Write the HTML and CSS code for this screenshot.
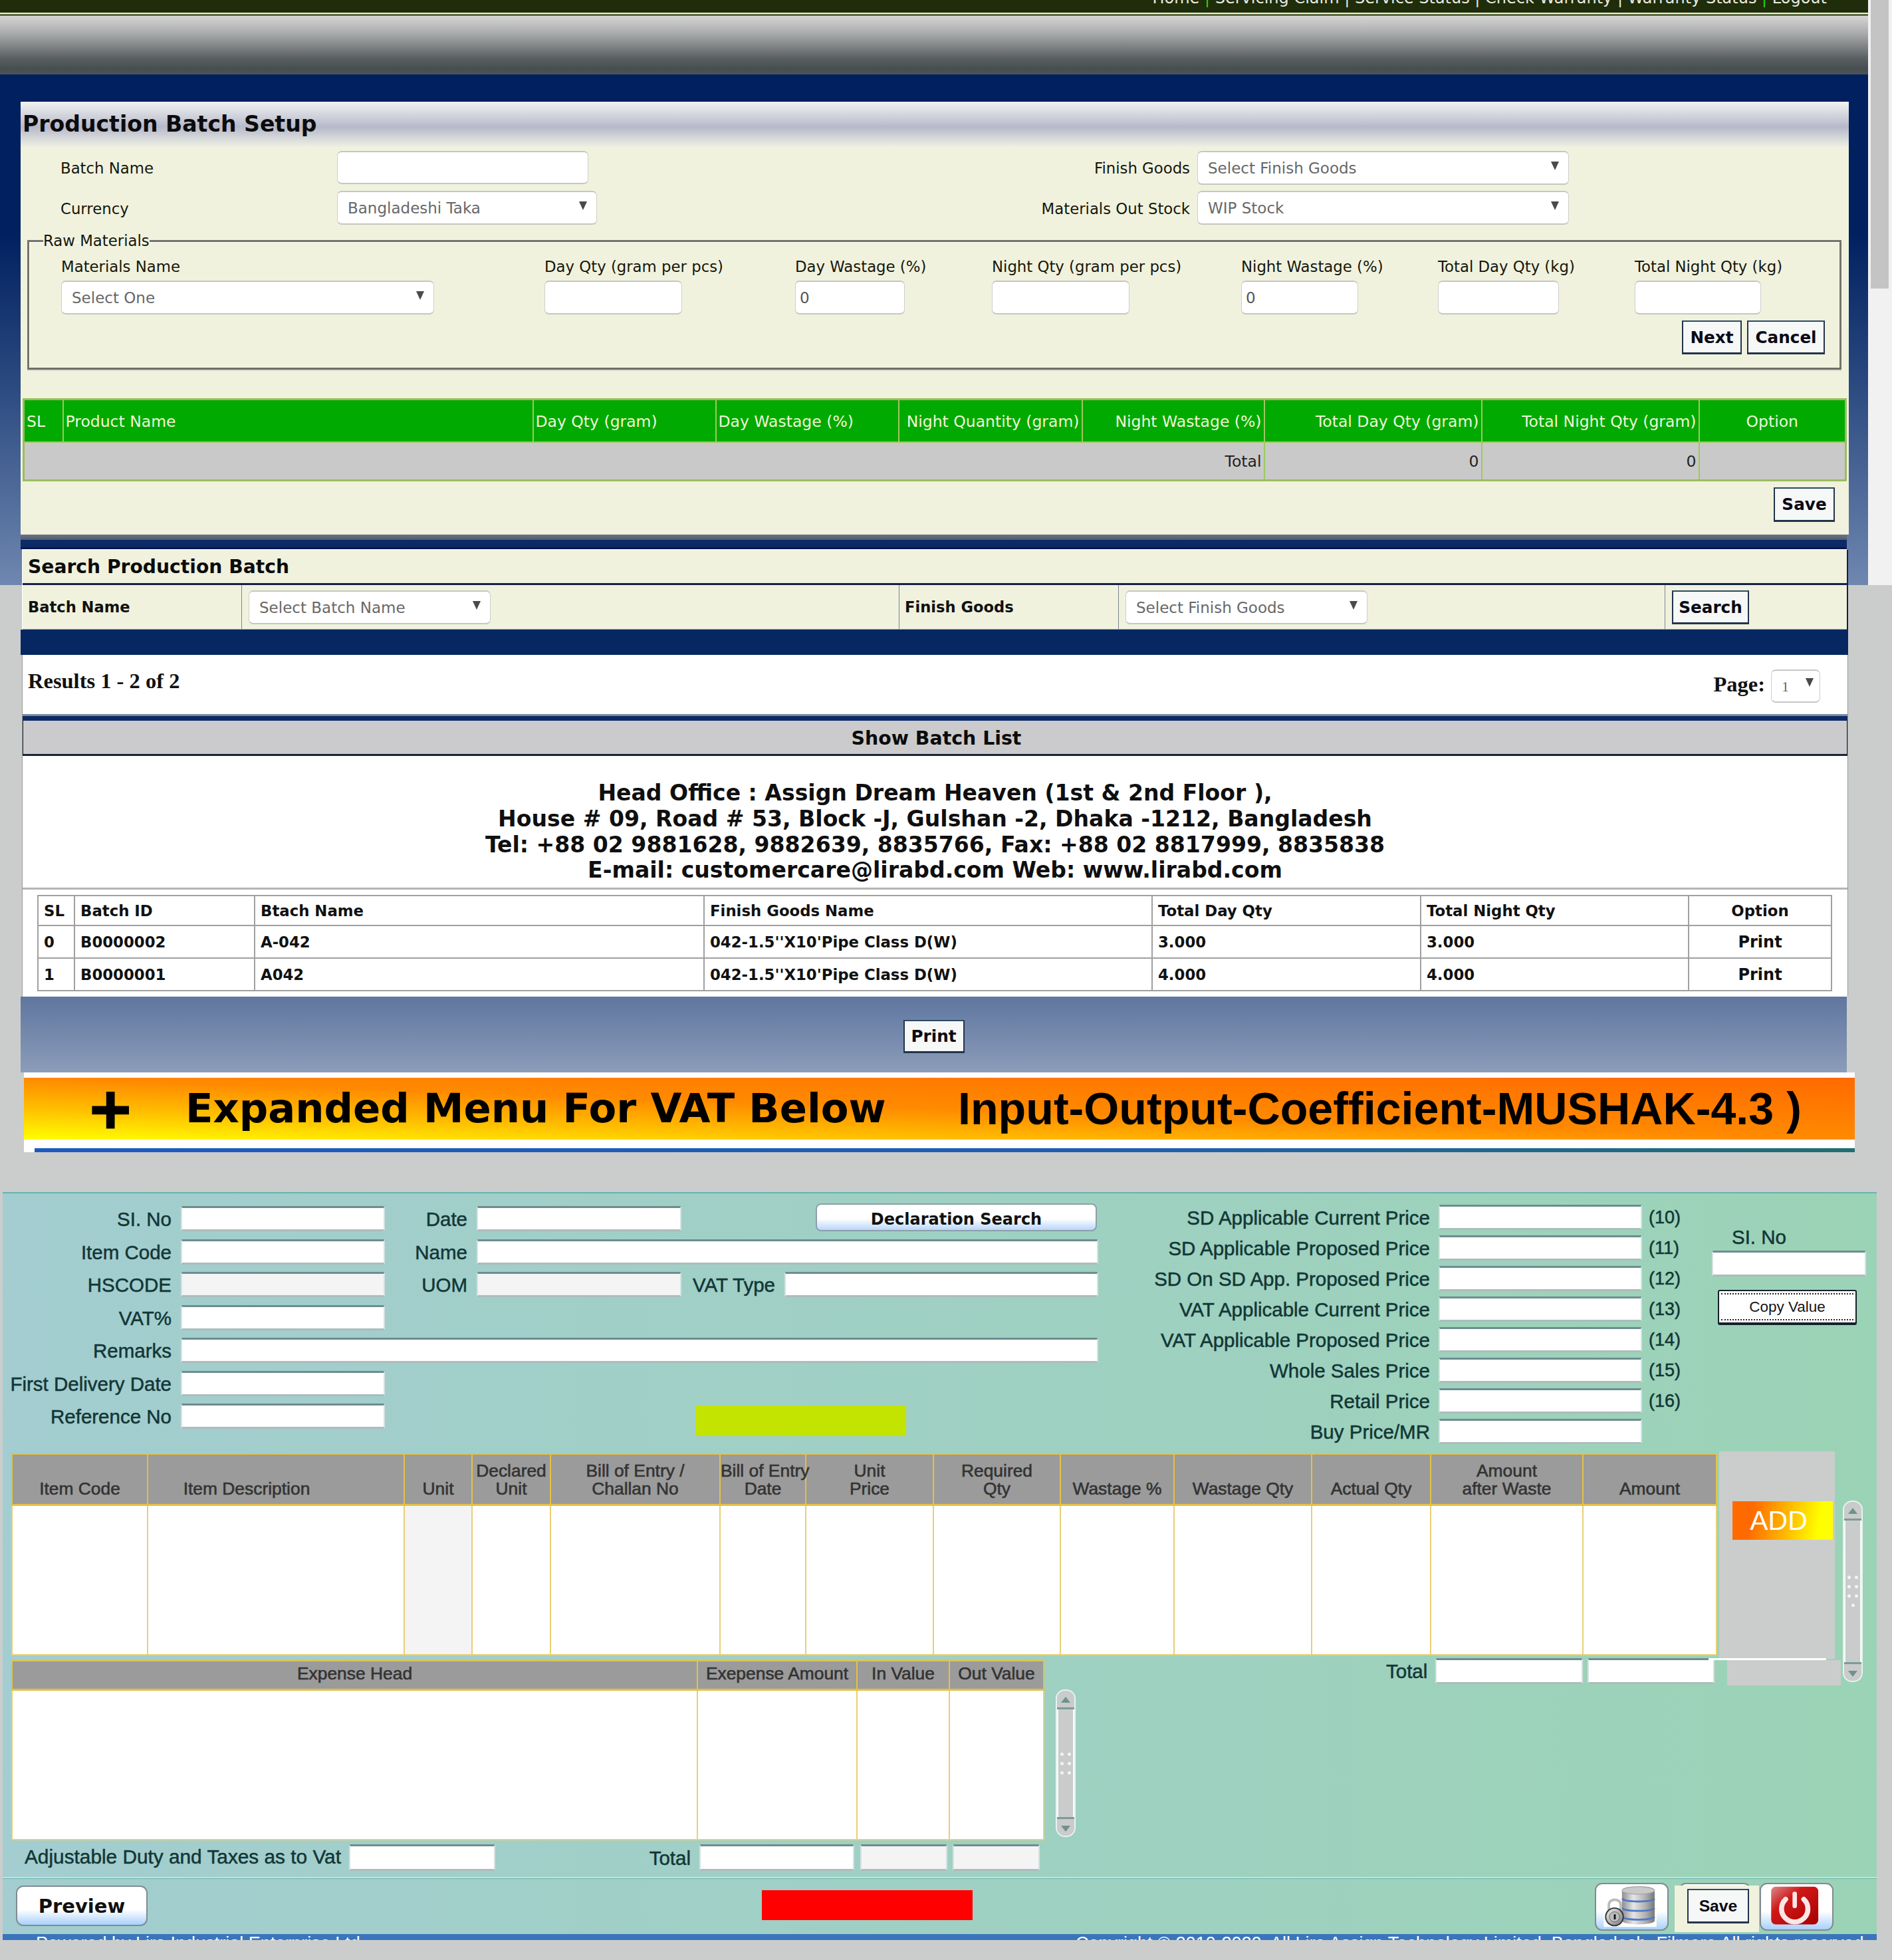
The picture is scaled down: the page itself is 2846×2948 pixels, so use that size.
FILE: index.html
```html
<!DOCTYPE html>
<html lang="en">
<head>
<meta charset="utf-8">
<title>Production Batch Setup</title>
<link rel="stylesheet" href="styles.css">
</head>
<body>
<div class="page">
  <div class="scrollbar-main"><div class="scrollbar-thumb"></div></div>

  <header class="topbar">
    <nav class="topnav">Home <b>|</b> Servicing Claim | Service Status | Check Warranty | Warranty Status <b>|</b> Logout</nav>
  </header>
  <div class="topline"></div>
  <div class="headband"></div>

  <main class="main">
    <section class="setup">
      <h1 class="setup-title">Production Batch Setup</h1>
      <div class="setup-grid">
        <label class="lbl">Batch Name</label>
        <div><input class="inp inp-batch" type="text"></div>
        <label class="lbl lbl-right">Finish Goods</label>
        <div class="sel sel-goods">Select Finish Goods</div>
        <label class="lbl">Currency</label>
        <div class="sel sel-cur">Bangladeshi Taka</div>
        <label class="lbl lbl-right">Materials Out Stock</label>
        <div class="sel sel-goods">WIP Stock</div>
      </div>
      <fieldset class="raw">
        <legend class="raw-legend">Raw Materials</legend>
        <div class="raw-grid">
          <div class="raw-col"><label class="lbl">Materials Name</label><div class="sel sel-mat">Select One</div></div>
          <div class="raw-col"><label class="lbl">Day Qty (gram per pcs)</label><input class="inp w207" type="text"></div>
          <div class="raw-col"><label class="lbl">Day Wastage (%)</label><input class="inp w165" type="text" value="0"></div>
          <div class="raw-col"><label class="lbl">Night Qty (gram per pcs)</label><input class="inp w207" type="text"></div>
          <div class="raw-col"><label class="lbl">Night Wastage (%)</label><input class="inp w176" type="text" value="0"></div>
          <div class="raw-col"><label class="lbl">Total Day Qty (kg)</label><input class="inp w182" type="text"></div>
          <div class="raw-col"><label class="lbl">Total Night Qty (kg)</label><input class="inp w190" type="text"></div>
        </div>
        <div class="raw-actions"><button class="btn btn-next">Next</button><button class="btn btn-cancel">Cancel</button></div>
      </fieldset>
      <table class="green-table">
        <colgroup><col class="g1"><col class="g2"><col class="g3"><col class="g4"><col class="g5"><col class="g6"><col class="g7"><col class="g8"><col class="g9"></colgroup>
        <thead><tr>
          <th>SL</th><th>Product Name</th><th>Day Qty (gram)</th><th>Day Wastage (%)</th>
          <th class="tr">Night Quantity (gram)</th><th class="tr">Night Wastage (%)</th><th class="tr">Total Day Qty (gram)</th><th class="tr">Total Night Qty (gram)</th><th class="tc">Option</th>
        </tr></thead>
        <tbody><tr><td colspan="6" class="tr">Total</td><td class="tr">0</td><td class="tr">0</td><td></td></tr></tbody>
      </table>
      <div class="save-row"><button class="btn btn-save">Save</button></div>
    </section>
    <div class="strip-gray"></div>
    <div class="strip-navy"></div>

    <section class="search">
      <h2 class="search-title">Search Production Batch</h2>
      <div class="search-grid">
        <div class="search-cell"><b>Batch Name</b></div>
        <div class="search-cell"><div class="sel sel-search">Select Batch Name</div></div>
        <div class="search-cell"><b>Finish Goods</b></div>
        <div class="search-cell"><div class="sel sel-search">Select Finish Goods</div></div>
        <div class="search-cell"><button class="btn btn-search">Search</button></div>
      </div>
    </section>
    <div class="band-navy"></div>

    <section class="results">
      <div class="results-bar">
        <span class="results-count">Results 1 - 2 of 2</span>
        <span class="results-page">Page:<span class="sel sel-page">1</span></span>
      </div>
      <h2 class="list-title">Show Batch List</h2>
      <address class="office">
        <div>Head Office : Assign Dream Heaven (1st &amp; 2nd Floor ),</div>
        <div>House # 09, Road # 53, Block -J, Gulshan -2, Dhaka -1212, Bangladesh</div>
        <div>Tel: +88 02 9881628, 9882639, 8835766, Fax: +88 02 8817999, 8835838</div>
        <div>E-mail: customercare@lirabd.com Web: www.lirabd.com</div>
      </address>
      <table class="batch-table">
        <colgroup><col class="b1"><col class="b2"><col class="b3"><col class="b4"><col class="b5"><col class="b6"><col class="b7"></colgroup>
        <thead><tr><th>SL</th><th>Batch ID</th><th>Btach Name</th><th>Finish Goods Name</th><th>Total Day Qty</th><th>Total Night Qty</th><th class="tc">Option</th></tr></thead>
        <tbody>
          <tr><td>0</td><td>B0000002</td><td>A-042</td><td>042-1.5''X10'Pipe Class D(W)</td><td>3.000</td><td>3.000</td><td class="tc print-link">Print</td></tr>
          <tr><td>1</td><td>B0000001</td><td>A042</td><td>042-1.5''X10'Pipe Class D(W)</td><td>4.000</td><td>4.000</td><td class="tc print-link">Print</td></tr>
        </tbody>
      </table>
    </section>
    <div class="print-band"><button class="btn btn-print">Print</button></div>
  </main>

  <section class="banner-wrap">
    <div class="banner">
      <span class="banner-plus">+</span>
      <span class="banner-a">Expanded Menu For VAT Below</span>
      <span class="banner-b">Input-Output-Coefficient-MUSHAK-4.3 )</span>
    </div>
    <div class="banner-line"></div>
  </section>

  <section class="vat">
    <div class="vat-top">
      <div class="vat-left">
        <label class="vl row-start">SI. No</label><input class="vi" type="text">
        <label class="vl">Date</label><input class="vi" type="text">
        <button class="decl">Declaration Search</button>

        <label class="vl row-start">Item Code</label><input class="vi" type="text">
        <label class="vl">Name</label><input class="vi span-3" type="text">

        <label class="vl row-start">HSCODE</label><input class="vi vi-off" type="text">
        <label class="vl">UOM</label><input class="vi vi-off" type="text">
        <label class="vl">VAT Type</label><input class="vi" type="text">

        <label class="vl row-start">VAT%</label><input class="vi" type="text">

        <label class="vl row-start">Remarks</label><input class="vi span-5" type="text">

        <label class="vl row-start">First Delivery Date</label><input class="vi" type="text">

        <label class="vl row-start">Reference No</label><input class="vi" type="text">
        <div class="lime"></div>
      </div>
      <div class="vat-right">
        <label class="vl">SD Applicable Current Price</label><input class="vi" type="text"><span class="vn">(10)</span>
        <label class="vl">SD Applicable Proposed Price</label><input class="vi" type="text"><span class="vn">(11)</span>
        <label class="vl">SD On SD App. Proposed Price</label><input class="vi" type="text"><span class="vn">(12)</span>
        <label class="vl">VAT Applicable Current Price</label><input class="vi" type="text"><span class="vn">(13)</span>
        <label class="vl">VAT Applicable Proposed Price</label><input class="vi" type="text"><span class="vn">(14)</span>
        <label class="vl">Whole Sales Price</label><input class="vi" type="text"><span class="vn">(15)</span>
        <label class="vl">Retail Price</label><input class="vi" type="text"><span class="vn">(16)</span>
        <label class="vl">Buy Price/MR</label><input class="vi" type="text"><span class="vn"></span>
      </div>
      <div class="vat-copy">
        <label class="vl vl-copy">SI. No</label>
        <input class="vi vi-copy" type="text">
        <button class="copy-btn"><span>Copy Value</span></button>
      </div>
    </div>

    <table class="gold-table">
      <colgroup><col class="t1"><col class="t2"><col class="t3"><col class="t4"><col class="t5"><col class="t6"><col class="t7"><col class="t8"><col class="t9"><col class="t10"><col class="t11"><col class="t12"><col class="t13"></colgroup>
      <thead><tr>
        <th>Item Code</th><th class="th-desc">Item Description</th><th>Unit</th><th>Declared<br>Unit</th><th>Bill of Entry /<br>Challan No</th><th>Bill of Entry<br>Date</th><th>Unit<br>Price</th><th>Required<br>Qty</th><th>Wastage %</th><th>Wastage Qty</th><th>Actual Qty</th><th>Amount<br>after Waste</th><th>Amount</th>
      </tr></thead>
      <tbody><tr><td></td><td></td><td class="off"></td><td></td><td></td><td></td><td></td><td></td><td></td><td></td><td></td><td></td><td></td></tr></tbody>
    </table>

    <div class="patch patch-add"><button class="add-btn">ADD</button></div>
    <div class="patch patch-low"></div>
    <div class="vscroll vscroll-a"><span class="vs-up"></span><span class="vs-track"><i></i><i></i><i></i><i></i><i></i><i></i><i></i></span><span class="vs-down"></span></div>

    <div class="vat-lower">
      <div class="lower-left">
        <div class="exp-row">
          <table class="gold-table exp-table">
            <colgroup><col class="e1"><col class="e2"><col class="e3"><col class="e4"></colgroup>
            <thead><tr><th class="tc">Expense Head</th><th>Exepense Amount</th><th>In Value</th><th>Out Value</th></tr></thead>
            <tbody><tr><td></td><td></td><td></td><td></td></tr></tbody>
          </table>
          <div class="vscroll vscroll-b"><span class="vs-up"></span><span class="vs-track"><i></i><i></i><i></i><i></i><i></i><i></i></span><span class="vs-down"></span></div>
        </div>
        <div class="adj-row">
          <label class="vl adj-l">Adjustable Duty and Taxes as to Vat</label><input class="vi adj-in" type="text">
          <label class="vl adj-t">Total</label>
          <input class="vi adj-1" type="text"><input class="vi vi-off adj-2" type="text"><input class="vi vi-off adj-3" type="text">
        </div>
      </div>
      <div class="lower-right">
        <label class="vl">Total</label><input class="vi tot-1" type="text"><input class="vi tot-2" type="text">
      </div>
    </div>

    <div class="vat-actions">
      <button class="glass glass-preview">Preview</button>
      <div class="red-box"></div>
      <button class="glass glass-icon" aria-label="Backup">
        <svg class="ico" viewBox="0 0 111 72">
          <defs>
            <linearGradient id="cyl" x1="0" x2="1" y1="0" y2="0"><stop offset="0" stop-color="#8e8e8e"/><stop offset=".35" stop-color="#e6e6e6"/><stop offset=".7" stop-color="#b4b4b4"/><stop offset="1" stop-color="#777"/></linearGradient>
            <linearGradient id="lock" x1="0" x2="1" y1="0" y2="1"><stop offset="0" stop-color="#f2f2f2"/><stop offset="1" stop-color="#777"/></linearGradient>
          </defs>
          <rect x="11" y="2" width="84" height="66" fill="#fff"/>
          <path d="M40 10c0-9 52-9 52 0v48c0 8-52 8-52 0z" fill="url(#cyl)"/>
          <ellipse cx="66" cy="10" rx="26" ry="6" fill="#c9c9c9" stroke="#999"/>
          <path d="M40 23c6 6 46 6 52 0M40 38c6 6 46 6 52 0M40 52c6 6 46 6 52 0" fill="none" stroke="#4f78c8" stroke-width="3"/>
          <path d="M19 42V33c0-11 19-11 19 0v9" fill="none" stroke="#bbb" stroke-width="4"/>
          <circle cx="28" cy="52" r="14" fill="url(#lock)" stroke="#333" stroke-width="2"/>
          <circle cx="28" cy="52" r="8" fill="#bdbdbd" stroke="#666"/>
          <rect x="27" y="48" width="3" height="8" fill="#111"/>
        </svg>
      </button>
      <div class="glass glass-behind">
        <div class="cream"><button class="btn btn-save2">Save</button></div>
      </div>
      <button class="glass glass-icon glass-power" aria-label="Exit">
        <svg class="ico" viewBox="0 0 111 72">
          <defs><linearGradient id="pw" x1="0" x2="1" y1="0" y2="1"><stop offset="0" stop-color="#d98a8a"/><stop offset=".35" stop-color="#d01818"/><stop offset="1" stop-color="#a80000"/></linearGradient></defs>
          <rect x="15" y="4" width="75" height="60" rx="7" fill="url(#pw)"/>
          <path d="M38 24a21 21 0 1 0 29 0" fill="none" stroke="#fbe6e6" stroke-width="8" stroke-linecap="round"/>
          <rect x="49" y="12" width="7" height="26" rx="3" fill="#fbe6e6"/>
        </svg>
      </button>
    </div>

    <footer class="vat-foot">
      <span>Powered by Lira Industrial Enterprise Ltd.</span>
      <span>Copyright © 2010-2020, All Lira Assign Technology Limited, Bangladesh. Filmore All rights reserved.</span>
    </footer>
  </section>
</div>
</body>
</html>
```
FILE: styles.css
```css
* { box-sizing: border-box; }
html, body { margin: 0; padding: 0; }
body { background: #cbcdcc; font-family: "DejaVu Sans", "Liberation Sans", sans-serif; color: #111; }
input, button { font-family: inherit; margin: 0; }

.page {
  position: relative;
  width: 2846px;
  height: 2948px;
  overflow: hidden;
  background: linear-gradient(#002060 0, #002060 350px, #2b4a80 580px, #6f87b0 880px) 0 0 / 2810px 880px no-repeat;
}

.scrollbar-main { position: absolute; left: 2810px; top: 0; width: 36px; height: 880px; background: #f1f1f1; padding-left: 4px; }
.scrollbar-thumb { width: 27px; height: 434px; background: #c4c4c4; }

.topbar { width: 2810px; height: 19px; background: #1f2d0a; overflow: hidden; display: flex; justify-content: flex-end; padding-right: 62px; }
.topnav { margin-top: -18px; line-height: 30px; font-size: 24px; color: #e9e9e0; white-space: nowrap; }
.topnav b { color: #26d01a; font-weight: 400; }
.topline { width: 2810px; height: 6px; background: linear-gradient(#eef0e0 0 33%, #5a6a38 33% 83%, #dfe0d8 83%); }
.headband { width: 2810px; height: 87px; background: linear-gradient(#d4d4d4 0, #a8a9aa 30%, #5a6062 72%, #474e50 90%, #4c5356); }

.main { width: 2750px; margin: 41px 0 0 31px; }

/* setup panel */
.setup { height: 651px; background: #f0f2de; }
.setup-title {
  margin: 0; height: 69px; padding-left: 3px;
  font-size: 33.1px; line-height: 68px; font-weight: 700; color: #0c0c0c; white-space: nowrap;
  background: linear-gradient(#f3f3f3 0, #b6b9ca 55%, #f0f2e4 100%);
}
.lbl { font-size: 22.8px; line-height: 30px; color: #17170c; white-space: nowrap; }
.setup-grid {
  display: grid;
  grid-template-columns: 416px 391px 892px 570px;
  grid-template-rows: 50px 51px;
  row-gap: 10px;
  padding: 5px 0 0 60px;
  align-items: center;
}
.setup-grid .lbl { padding-top: 2px; }
.lbl-right { text-align: right; }
.inp {
  height: 51px; padding: 0 6px; font-size: 23px; color: #555; background: #fff;
  border: 1px solid #cfcfcb; border-top: 2px solid #c6c6c2; border-bottom: 2px solid #c6c6c2; border-radius: 7px;
}
.inp-batch { width: 378px; height: 50px; display: block; }
.sel {
  position: relative; display: block; height: 51px; padding: 0 12px 0 15px;
  font-size: 23px; line-height: 48px; color: #686868; background: #fff; white-space: nowrap;
  border: 1px solid #cfcfcb; border-top: 2px solid #c6c6c2; border-bottom: 2px solid #c6c6c2; border-radius: 7px;
}
.sel::after {
  content: ""; position: absolute; right: 14px; top: 14px;
  border-left: 6px solid transparent; border-right: 6px solid transparent; border-top: 13px solid #4a4a4a;
}
.sel-goods { width: 559px; margin-left: 11px; }
.sel-cur { width: 391px; }
.sel-mat { width: 561px; }

.raw {
  width: 2729px; height: 209px; margin: 9px 0 0 10px; padding: 0 0 0 48px; min-width: 0;
  border: 3px solid #74746c; border-bottom-color: #6e6e66;
  box-shadow: inset 1px 1px 0 #fff, 0 2px 0 #d8d8cc;
}
.raw-legend { margin-left: -27px; padding: 0; font-size: 22.8px; line-height: 30px; color: #17170c; }
.raw-grid { display: grid; grid-template-columns: 727px 377px 296px 375px 296px 296px 190px; margin-top: 9px; }
.raw-col { display: flex; flex-direction: column; }
.raw-col .lbl { height: 36px; }
.w207 { width: 207px; }
.w165 { width: 165px; }
.w176 { width: 176px; }
.w182 { width: 182px; }
.w190 { width: 190px; }
.raw-actions { display: flex; justify-content: flex-end; gap: 8px; padding-right: 22px; margin-top: 9px; }
.btn {
  height: 51px; background: #f6f7f7; color: #0a0a14; font-size: 24.7px; font-weight: 700; padding: 0;
  border: 2px solid #23344c; border-bottom-width: 3px; border-top-color: #2c4a66;
}
.btn-next { width: 90px; }
.btn-cancel { width: 117px; }

.green-table {
  width: 2741px; margin: 43px 0 0 3px; table-layout: fixed; border-collapse: collapse;
  border: 3px solid #9cbc60; font-size: 23.5px;
}
.g1 { width: 59px; } .g2 { width: 707px; } .g3 { width: 275px; } .g4 { width: 275px; } .g5 { width: 276px; }
.g6 { width: 274px; } .g7 { width: 327px; } .g8 { width: 327px; } .g9 { width: 221px; }
.green-table th, .green-table td { border: 2px solid #9fc860; padding: 2px 3px 0; white-space: nowrap; overflow: hidden; }
.green-table th { height: 64px; background: #00aa00; color: #f2f5d8; font-weight: 400; text-align: left; }
.green-table td { height: 58px; background: #c9c9c9; color: #222; }
.green-table .tr { text-align: right; }
.green-table .tc { text-align: center; }
.save-row { display: flex; justify-content: flex-end; padding: 9px 21px 0 0; }
.btn-save { width: 92px; height: 52px; }
.strip-gray { height: 8px; width: 2747px; background: linear-gradient(#6d7582, #4f5b6e); }
.strip-navy { height: 14px; width: 2747px; background: linear-gradient(#0c2a66 70%, #000c44); }

/* search */
.search { width: 2747px; height: 121px; margin-left: 2px; margin-right: 0; background: #f0f2de; border-left: 1px solid #fff; border-right: 2px solid #1a1f3a; border-top: 1px solid #fff; }
.search-title { margin: 0; height: 53px; border-bottom: 3px solid #15204a; font-size: 28.2px; line-height: 52px; font-weight: 700; padding-left: 8px; color: #0c0c0c; white-space: nowrap; }
.search-grid { display: grid; grid-template-columns: 329px 989px 330px 822px 272px; height: 67px; border-bottom: 1px solid #8e9aa8; }
.search-cell { display: flex; align-items: center; padding-left: 8px; border-left: 1px solid #7d8690; font-size: 26px; white-space: nowrap; }
.search-cell b { font-size: 22.6px; }
.search-cell:first-child { border-left: 0; }
.search-cell:nth-child(2), .search-cell:nth-child(4), .search-cell:nth-child(5) { padding-left: 10px; align-items: flex-start; padding-top: 8px; }
.sel-search { width: 364px; }
.btn-search { width: 116px; height: 51px; }

.band-navy { width: 2749px; height: 38px; margin-left: 0; background: #062761; }

.results { width: 2747px; margin-left: 2px; background: #fff; border-left: 1px solid #999; border-right: 1px solid #999; height: 514px; }
.results-bar {
  height: 92px; display: flex; justify-content: space-between; align-items: flex-start; padding: 18px 41px 0 8px;
  border-bottom: 3px solid #7d8aa0;
  font-family: "Liberation Serif", serif; font-weight: 700; color: #111;
}
.results-count { font-size: 32.5px; line-height: 42px; }
.results-page { display: flex; align-items: flex-start; font-size: 32.5px; line-height: 44px; padding-top: 4px; }
.sel-page { width: 74px; margin: 0 0 0 9px; padding-left: 15px; font-size: 22px; line-height: 48px; height: 50px; margin-top: 0; font-weight: 400; }
.sel-page::after { right: 9px; top: 11px; }
.list-title {
  margin: 0; height: 60px; text-align: center; font-size: 28.4px; line-height: 54px; font-weight: 700; color: #0b0b0b; white-space: nowrap;
  background: #cbcbcd; border-top: 7px solid #0c2a66; border-bottom: 3px solid #1c2434; border-left: 1px solid #1c2434; border-right: 1px solid #1c2434;
  padding-left: 4px;
}
.office { height: 201px; padding-top: 37px; font-style: normal; font-weight: 700; font-size: 33.1px; line-height: 38.8px; text-align: center; color: #0f0f0f; border-bottom: 3px solid #b5b5b5; white-space: nowrap; }
.batch-table {
  width: 2698px; margin: 8px 0 0 22px; table-layout: fixed; border-collapse: collapse; font-size: 22.8px; font-weight: 700; color: #111;
  border: 2px solid #9a9a9a;
}
.b1 { width: 55px; } .b2 { width: 271px; } .b3 { width: 676px; } .b4 { width: 674px; } .b5 { width: 404px; } .b6 { width: 403px; } .b7 { width: 215px; }
.batch-table th, .batch-table td { border: 2px solid #a0a0a0; padding: 0 8px; text-align: left; white-space: nowrap; font-weight: 700; }
.batch-table th { height: 45px; }
.batch-table td { height: 49px; }
.batch-table .tc { text-align: center; }
.print-link { font-size: 24px; }

.print-band { width: 2747px; height: 114px; display: flex; justify-content: center; align-items: flex-start; padding: 35px 0 0 0; background: linear-gradient(#5f769f, #8c9cba); margin-left: 0; }
.btn-print { width: 92px; height: 50px; margin-right: 0; }

/* banner */
.banner-wrap { width: 2754px; margin-left: 36px; height: 120px; background: #fff; padding-top: 8px; }
.banner {
  height: 93px; display: flex; align-items: center; white-space: nowrap; overflow: hidden;
  background: linear-gradient(to top right, #ffff00 0, #ffc000 25%, #ff8a00 50%, #ff6a00 100%);
  color: #000;
}
.banner-plus { width: 243px; padding-left: 95px; font-family: "DejaVu Sans", sans-serif; font-weight: 700; font-size: 84px; line-height: 93px; -webkit-text-stroke: 3px #000; }
.banner-a { width: 1162px; font-family: "DejaVu Sans", sans-serif; font-weight: 700; font-size: 60.8px; line-height: 93px; }
.banner-b { font-family: "Liberation Sans", sans-serif; font-weight: 700; font-size: 68.2px; line-height: 93px; }
.banner-line { height: 6px; margin: 13px 0 0 16px; background: linear-gradient(90deg, #1d5ac0, #1f5fb0 60%, #1f6f70); }

/* lower form */
.vat {
  position: relative; width: 2819px; height: 1125px; margin: 60px 0 0 4px; overflow: hidden;
  background: linear-gradient(90deg, #a3cdd0, #9bd3b6);
  border-top: 2px solid #66b4ae;
  font-family: "Liberation Sans", Arial, sans-serif;
}
.vat-top { display: flex; height: 391px; }
.vl { font-size: 29.5px; line-height: 40px; color: #123636; white-space: nowrap; text-align: right; padding-right: 14px; -webkit-text-stroke: .5px #123636; }
.vi {
  height: 38px; min-width: 0; width: 100%; display: block; background: #fff; padding: 0;
  border: 2px solid #d4e2e2; border-top: 3px solid #6d8d8f; border-bottom: 3px solid #aebcbc; border-radius: 3px;
}
.vi-off { background: #f4f4f4; }
.vat-left {
  display: grid; width: 1648px; padding-top: 19px;
  grid-template-columns: 268px 307px 138px 308px 155px 472px;
  grid-auto-rows: 38px; row-gap: 11.5px; align-content: start;
}
.row-start { grid-column: 1; }
.span-3 { grid-column: span 3; }
.span-5 { grid-column: span 5; }
.decl {
  grid-column: 5 / span 2; justify-self: start; margin: -4px 0 0 202px; width: 423px; height: 42px;
  font-size: 24px; line-height: 40px; font-family: "DejaVu Sans", sans-serif; font-weight: 700; color: #111; white-space: nowrap;
  background: linear-gradient(#fff 55%, #b8d6fa); border: 2px solid #8aa0a8; border-radius: 8px; padding: 2px 0 0;
}
.lime { grid-column: 5 / span 2; margin: 3px 0 0 21px; width: 317px; height: 46px; background: #c3e400; }
.vat-right {
  display: grid; width: 923px; margin-left: 0; padding-top: 17px;
  grid-template-columns: 512px 306px 105px;
  grid-auto-rows: 38px; row-gap: 8px; align-content: start;
}
.vat-right .vl { padding-right: 13px; }
.vn { padding-left: 10px; font-size: 27px; line-height: 38px; color: #123636; -webkit-text-stroke: .5px #123636; white-space: nowrap; }
.vat-copy { display: flex; flex-direction: column; padding-top: 48px; }
.vl-copy { text-align: left; padding: 0 0 0 30px; line-height: 36px; height: 38px; }
.vi-copy { width: 232px; height: 39px; margin-top: 0; }
.copy-btn { width: 209px; height: 53px; margin: 20px 0 0 9px; padding: 3px; background: #fff; border: 2px solid #16202a; border-bottom-width: 4px; border-radius: 3px; font-family: "Liberation Sans", sans-serif; font-size: 22.5px; color: #15151a; }
.copy-btn span { display: block; height: 100%; line-height: 38px; border-top: 2px dotted #222; border-bottom: 2px dotted #222; }

.gold-table {
  width: 2564px; margin-left: 13px; table-layout: fixed; border-collapse: collapse; font-size: 26.4px;
  border: 2px solid #e3c145;
}
.t1 { width: 204px; } .t2 { width: 386px; } .t3 { width: 102px; } .t4 { width: 118px; } .t5 { width: 255px; } .t6 { width: 129px; } .t7 { width: 192px; }
.t8 { width: 191px; } .t9 { width: 171px; } .t10 { width: 207px; } .t11 { width: 179px; } .t12 { width: 229px; } .t13 { width: 201px; }
.gold-table th {
  height: 76px; padding: 0 0 9px; background: #9b9b9b; color: #333; font-weight: 400; line-height: 27px; vertical-align: bottom;
  white-space: nowrap; border: 2px solid #e3c145; border-bottom-width: 3px; -webkit-text-stroke: .6px #333;
}
.gold-table .th-desc { padding-right: 88px; }
.gold-table td { height: 226px; background: #fff; border: 2px solid #e8cf74; border-top: 0; }
.gold-table .off { background: #f4f4f4; }

.patch { position: absolute; background: #cbcdcc; }
.patch-add { left: 2582px; top: 388px; width: 174px; height: 312px; padding: 75px 0 0 20px; }
.patch-low { left: 2594px; top: 702px; width: 171px; height: 38px; }
.patch-low::before { content: ""; position: absolute; left: -28px; top: -3px; width: 177px; height: 3px; background: #fff; }
.add-btn { width: 151px; height: 58px; padding: 0 12px 0 0; border: 0; color: #fff; font-family: "Liberation Sans", sans-serif; font-size: 41px; background: linear-gradient(100deg, #ff6a00 20%, #ffff00 85%); }

.vscroll { display: flex; flex-direction: column; width: 30px; background: #c9cccb; border: 2px solid #e6f4f0; border-radius: 14px; overflow: hidden; }
.vscroll-a { position: absolute; left: 2768px; top: 462px; height: 273px; }
.vscroll-b { margin: 44px 0 0 17px; height: 222px; }
.vs-up, .vs-down { position: relative; height: 28px; flex: none; background: #c9cccb; }
.vs-up { border-bottom: 3px solid #7f9a98; }
.vs-down { border-top: 3px solid #7f9a98; }
.vs-up::after, .vs-down::after { content: ""; position: absolute; left: 6px; border-left: 7px solid transparent; border-right: 7px solid transparent; }
.vs-up::after { top: 9px; border-bottom: 9px solid #6f9190; }
.vs-down::after { top: 10px; border-top: 9px solid #6f9190; }
.vs-track { flex: 1; display: flex; flex-wrap: wrap; align-content: center; justify-content: center; gap: 9px 6px; padding: 0 2px; border-left: 2px solid #f4fbfa; border-right: 2px solid #f4fbfa; }
.vs-track i { width: 5px; height: 5px; border-radius: 50%; background: #f0f4f4; }

.vat-lower { display: flex; margin-top: 7px; }
.lower-left { width: 1612px; margin-left: 13px; }
.exp-row { display: flex; }
.exp-table { width: 1552px; margin-left: 0; }
.e1 { width: 1031px; } .e2 { width: 240px; } .e3 { width: 139px; } .e4 { width: 142px; }
.exp-table th { height: 43px; padding: 0 0 4px; vertical-align: middle; }
.exp-table td { height: 226px; }
.adj-row { display: flex; margin-top: 6px; height: 40px; }
.adj-row .vi { height: 40px; }
.adj-l { width: 495px; padding-right: 0; font-size: 29.8px; line-height: 38px; text-align: left; padding-left: 20px; }
.adj-in { flex: none; width: 220px; margin-left: 13px; }
.adj-t { width: 307px; line-height: 42px; padding-right: 13px; }
.adj-1 { flex: none; width: 233px; }
.adj-2 { flex: none; width: 131px; margin-left: 9px; }
.adj-3 { flex: none; width: 131px; margin-left: 8px; }
.lower-right { display: flex; margin: -3px 0 0 0; padding-left: 456px; height: 39px; }
.lower-right .vl { padding-right: 12px; line-height: 40px; }
.tot-1 { width: 222px; height: 39px; flex: none; }
.tot-2 { width: 191px; height: 39px; flex: none; margin-left: 7px; }

.vat-actions { position: relative; display: flex; align-items: flex-start; height: 87px; margin-top: 9px; padding: 7px 0 0 20px; border-top: 2px solid #bfe4d8; box-shadow: inset 0 1px 0 #6cb6ac; }
.glass { height: 72px; padding: 0; background: linear-gradient(#fff 60%, #a9d0fb); border: 2px solid #7f8c90; border-radius: 11px; }
.glass-preview { width: 198px; height: 61px; margin-top: 4px; font-family: "DejaVu Sans", sans-serif; font-size: 29px; font-weight: 700; color: #111; line-height: 50px; }
.red-box { width: 317px; height: 45px; margin: 11px 0 0 924px; background: #ff0000; }
.glass-icon { width: 111px; margin-left: 936px; }
.glass-behind { position: relative; width: 109px; margin-left: 15px; }
.glass-power { margin-left: 13px; }
.ico { display: block; width: 107px; height: 68px; }
.cream { position: absolute; left: -8px; top: 2px; width: 127px; height: 70px; background: #f0f2de; padding: 5px 0 0 19px; }
.btn-save2 { width: 93px; height: 52px; }

.vat-foot {
  position: absolute; left: 0; right: 0; bottom: 0; height: 9px; overflow: hidden; display: flex; justify-content: space-between;
  padding: 7px 12px 0 50px; background: #3a75bc; color: #fff; font-size: 27px; line-height: 14px; white-space: nowrap;
}
```
